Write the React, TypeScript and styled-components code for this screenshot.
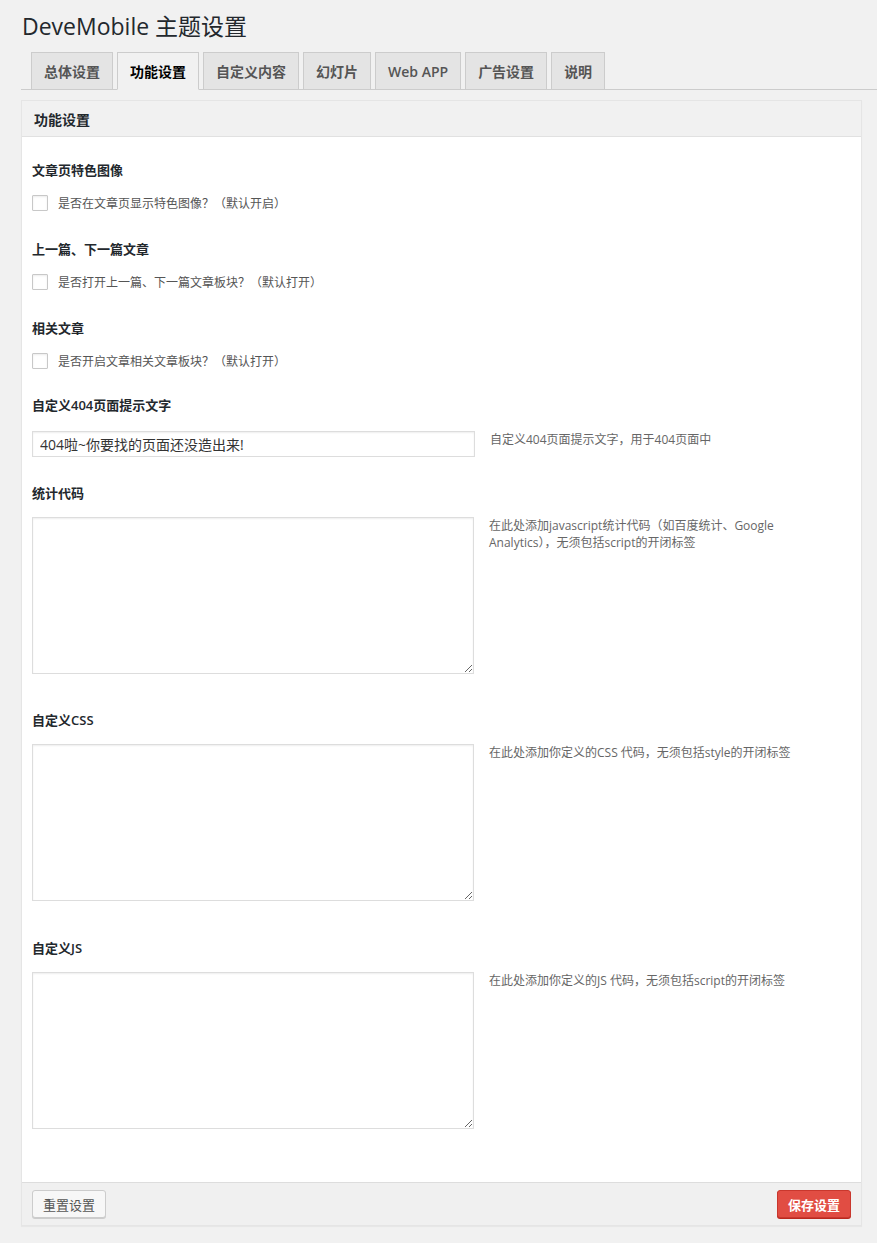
import React from 'react';
import styled, { createGlobalStyle } from 'styled-components';

const GlobalStyle = createGlobalStyle`
  html, body {
    margin: 0;
    padding: 0;
    background: #f1f1f1;
  }
  body {
    font-family: "Open Sans", "Noto Sans CJK SC", sans-serif;
    color: #444;
  }
`;

const Wrap = styled.div`
  padding: 10px 15px 18px 21px;
`;

const Title = styled.h1`
  margin: 0 0 0 1px;
  font-size: 23px;
  font-weight: 400;
  line-height: 32px;
  color: #23282d;
`;

const TabBar = styled.div`
  display: flex;
  gap: 4px;
  margin: 10px -15px 0 0;
  padding-left: 10px;
  border-bottom: 1px solid #ccc;
`;

const Tab = styled.div<{ $active?: boolean }>`
  height: 38px;
  box-sizing: border-box;
  padding: 0 12px;
  margin-bottom: -1px;
  display: flex;
  align-items: center;
  font-size: 14px;
  font-weight: 600;
  color: ${(p) => (p.$active ? '#000' : '#555')};
  background: ${(p) => (p.$active ? '#f1f1f1' : '#e4e4e4')};
  border: 1px solid #ccc;
  border-bottom-color: ${(p) => (p.$active ? '#f1f1f1' : '#ccc')};
`;

const Panel = styled.div`
  margin-top: 10px;
  width: 841px;
  box-sizing: border-box;
  border: 1px solid #e5e5e5;
  box-shadow: 0 1px 1px rgba(0, 0, 0, 0.04);
  background: #fff;
`;

const PanelHead = styled.div`
  height: 36px;
  box-sizing: border-box;
  padding: 0 12px;
  display: flex;
  align-items: center;
  background: #f1f1f1;
  border-bottom: 1px solid #e1e1e1;
  font-size: 14px;
  font-weight: 600;
  color: #23282d;
`;

const PanelBody = styled.div`
  padding: 23px 10px 53px 10px;
`;

const Field = styled.div<{ $after: number }>`
  margin-bottom: ${(p) => p.$after}px;
`;

const Label = styled.div<{ $gap: number }>`
  font-size: 13px;
  font-weight: 600;
  line-height: 20px;
  color: #23282d;
  margin-bottom: ${(p) => p.$gap}px;
`;

const CheckRow = styled.label`
  display: flex;
  align-items: center;
  gap: 10px;
  font-size: 12px;
  color: #555;
  height: 16px;
`;

const Box = styled.span`
  width: 16px;
  height: 16px;
  box-sizing: border-box;
  border: 1px solid #c8c8c8;
  border-radius: 1px;
  background: #fff;
  box-shadow: inset 0 1px 2px rgba(0, 0, 0, 0.08);
`;

const Row = styled.div`
  display: flex;
  align-items: flex-start;
  gap: 15px;
`;

const TextInput = styled.input`
  width: 443px;
  height: 26px;
  box-sizing: border-box;
  border: 1px solid #ddd;
  box-shadow: inset 0 1px 2px rgba(0, 0, 0, 0.07);
  padding: 0 7px;
  font-family: "Open Sans", "Noto Sans CJK SC", sans-serif;
  font-size: 14px;
  color: #333;
  outline: none;
`;

const Area = styled.textarea`
  width: 442px;
  height: 157px;
  box-sizing: border-box;
  border: 1px solid #ddd;
  box-shadow: inset 0 1px 2px rgba(0, 0, 0, 0.07);
  resize: vertical;
  margin: 0;
  outline: none;
`;

const Desc = styled.div`
  width: 320px;
  font-size: 12px;
  line-height: 17px;
  color: #666;
`;

const Footer = styled.div`
  display: flex;
  justify-content: space-between;
  align-items: center;
  padding: 7px 10px 7px 10px;
  background: #f0f0f0;
  border-top: 1px solid #ddd;
`;

const Button = styled.button<{ $primary?: boolean }>`
  height: 28px;
  padding: 0 10px;
  border-radius: 3px;
  font-family: "Open Sans", "Noto Sans CJK SC", sans-serif;
  font-size: 13px;
  font-weight: ${(p) => (p.$primary ? 600 : 400)};
  color: ${(p) => (p.$primary ? '#fff' : '#555')};
  background: ${(p) => (p.$primary ? '#e14d43' : '#f7f7f7')};
  border: 1px solid ${(p) => (p.$primary ? '#c9372d' : '#ccc')};
  box-shadow: 0 1px 0 ${(p) => (p.$primary ? '#ba281e' : '#ccc')};
  cursor: pointer;
`;

const tabs = ['总体设置', '功能设置', '自定义内容', '幻灯片', 'Web APP', '广告设置', '说明'];

const checks = [
  { label: '文章页特色图像', text: '是否在文章页显示特色图像？（默认开启）', after: 28 },
  { label: '上一篇、下一篇文章', text: '是否打开上一篇、下一篇文章板块？（默认打开）', after: 28 },
  { label: '相关文章', text: '是否开启文章相关文章板块？（默认打开）', after: 26 },
];

const areas = [
  { label: '统计代码', desc: '在此处添加javascript统计代码（如百度统计、Google Analytics），无须包括script的开闭标签', after: 36 },
  { label: '自定义CSS', desc: '在此处添加你定义的CSS 代码，无须包括style的开闭标签', after: 37 },
  { label: '自定义JS', desc: '在此处添加你定义的JS 代码，无须包括script的开闭标签', after: 0 },
];

export default function App() {
  return (
    <Wrap>
      <GlobalStyle />
      <Title>DeveMobile 主题设置</Title>
      <TabBar>
        {tabs.map((t) => (
          <Tab key={t} $active={t === '功能设置'}>
            {t}
          </Tab>
        ))}
      </TabBar>
      <Panel>
        <PanelHead>功能设置</PanelHead>
        <PanelBody>
          {checks.map((c) => (
            <Field key={c.label} $after={c.after}>
              <Label $gap={15}>{c.label}</Label>
              <CheckRow>
                <Box />
                {c.text}
              </CheckRow>
            </Field>
          ))}
          <Field $after={26}>
            <Label $gap={16}>自定义404页面提示文字</Label>
            <Row>
              <TextInput defaultValue="404啦~你要找的页面还没造出来!" />
              <Desc>自定义404页面提示文字，用于404页面中</Desc>
            </Row>
          </Field>
          {areas.map((a) => (
            <Field key={a.label} $after={a.after}>
              <Label $gap={14}>{a.label}</Label>
              <Row>
                <Area />
                <Desc>{a.desc}</Desc>
              </Row>
            </Field>
          ))}
        </PanelBody>
        <Footer>
          <Button>重置设置</Button>
          <Button $primary>保存设置</Button>
        </Footer>
      </Panel>
    </Wrap>
  );
}
